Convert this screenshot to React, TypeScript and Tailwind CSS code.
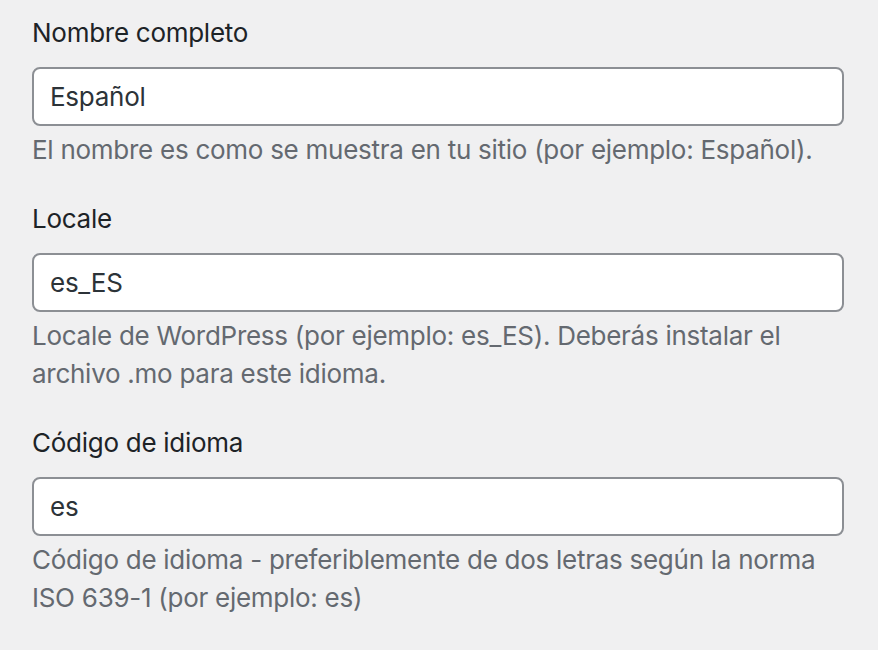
export default function App() {
  const fields = [
    {
      label: "Nombre completo",
      value: "Español",
      desc: "El nombre es como se muestra en tu sitio (por ejemplo: Español).",
    },
    {
      label: "Locale",
      value: "es_ES",
      desc: "Locale de WordPress (por ejemplo: es_ES). Deberás instalar el archivo .mo para este idioma.",
    },
    {
      label: "Código de idioma",
      value: "es",
      desc: "Código de idioma - preferiblemente de dos letras según la norma ISO 639-1 (por ejemplo: es)",
    },
  ];

  return (
    <div className="min-h-[650px] w-[878px] bg-[#f0f0f1] pl-[32px] pr-[34px] pt-[15px] font-['Inter',sans-serif] tracking-[-0.27px]">
      <div className="flex flex-col gap-[32px]">
        {fields.map((f) => (
          <div key={f.label}>
            <label className="block text-[26px] leading-[36px] text-[#1d2327]">{f.label}</label>
            <input
              type="text"
              defaultValue={f.value}
              className="mt-[16px] block h-[59px] w-full rounded-[8px] border-2 border-[#8c8f94] bg-white px-[16px] text-[26px] tracking-[-0.27px] text-[#2c3338] outline-none"
            />
            <p className="mt-[5px] text-[26px] leading-[38px] text-[#646970]">{f.desc}</p>
          </div>
        ))}
      </div>
    </div>
  );
}
